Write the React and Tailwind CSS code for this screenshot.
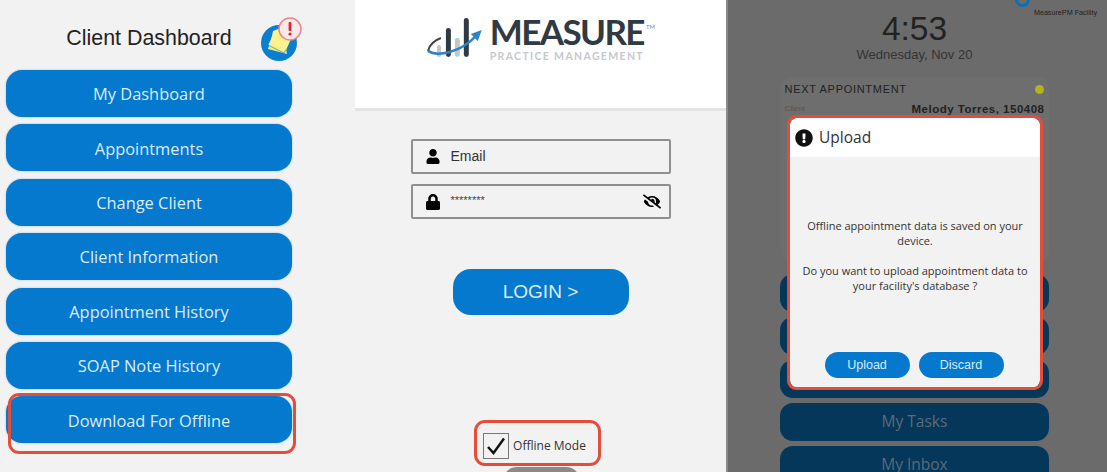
import React from 'react'
import { FaUser, FaLock, FaEyeSlash, FaExclamationCircle } from 'react-icons/fa'

const menu = ['My Dashboard', 'Appointments', 'Change Client', 'Client Information', 'Appointment History', 'SOAP Note History', 'Download For Offline']

function NotesBadge(){
  return (
    <svg width="42" height="44" viewBox="0 0 42 44">
      <circle cx="19" cy="26" r="18" fill="#0a7fd0" />
      <path d="M10 26 L26 31 L27 37 L8 32 Z" fill="#f3e97a" />
      <path d="M12 19 L29 26 L24 36 L8 28 Z" fill="#f8f08a" stroke="#0a7fd0" strokeWidth="0.6" />
      <path d="M13 14 L21 11 L31 22 L26 33 L11 24 Z" fill="#fbf38e" />
      <circle cx="30" cy="12" r="11" fill="#fbe9e9" stroke="#e8868a" strokeWidth="1.5" />
      <rect x="28.6" y="5" width="2.8" height="9" rx="1" fill="#e3212f" />
      <circle cx="30" cy="17" r="1.6" fill="#e3212f" />
    </svg>
  )
}

function LogoMark(){
  return (
    <svg width="56" height="46" viewBox="0 0 56 46">
      <rect x="10" y="30" width="4" height="12" rx="2" fill="#c3c6cb" />
      <rect x="19" y="13" width="5" height="29" rx="2.5" fill="#2f3a44" />
      <rect x="28" y="23" width="5" height="19" rx="2.5" fill="#c3c6cb" />
      <rect x="37" y="3" width="5" height="39" rx="2.5" fill="#2f3a44" />
      <path d="M1 36 C2 30 8 25 14 23" fill="none" stroke="#3b4650" strokeWidth="2" />
      <path d="M1 36 C10 42 34 38 50 20" fill="none" stroke="#2c83c7" strokeWidth="2.6" />
      <path d="M55 15 L44 19 L51 26 Z" fill="#2c83c7" />
    </svg>
  )
}

export default function App(){
  return (
    <div className="relative w-[1107px] h-[472px] overflow-hidden flex bg-[#f2f2f2] font-['Open_Sans',sans-serif]">
      {/* left: client menu */}
      <section className="w-[355px] shrink-0 pl-[6px] pt-[20px]">
        <div className="w-[286px] h-[50px] relative flex items-center justify-center">
          <h1 className="font-['Liberation_Sans',sans-serif] text-[21.4px] text-[#222] -mt-[14px]">Client Dashboard</h1>
          <div className="absolute left-[254px] top-[-3px]"><NotesBadge /></div>
        </div>
        <div className="flex flex-col gap-[7.4px] w-[286px]">
          {menu.map(m => (
            <button key={m} className="h-[47px] pt-[2px] rounded-[16px] bg-[#0579ce] text-[#dcebf7] text-[16.4px] shadow-[0_0_2px_#7db9e6]">{m}</button>
          ))}
        </div>
      </section>

      {/* middle: login */}
      <section className="w-[371px] shrink-0 flex flex-col items-center">
        <header className="w-full h-[111px] shrink-0 bg-white border-b-[3px] border-[#e4e4e4] flex justify-center pt-[15px]">
          <div className="flex items-start gap-[7px] w-[228px] ml-[1px]">
            <LogoMark />
            <div className="flex flex-col font-['Lato',sans-serif] leading-none">
              <span className="text-[#2f3a44] text-[35px] font-bold tracking-[-1.6px] leading-[32px] whitespace-nowrap">MEASURE<sup className="text-[6px] font-normal text-[#888] align-super ml-[2px] tracking-normal">TM</sup></span>
              <span className="text-[#c6c9ce] text-[10.5px] font-bold tracking-[1.35px] mt-[4px] whitespace-nowrap">PRACTICE MANAGEMENT</span>
            </div>
          </div>
        </header>
        <div className="mt-[28px] w-[260px] flex flex-col gap-[10px] font-['Liberation_Sans',sans-serif]">
          <label className="h-[35px] border-2 border-[#8f8f8f] rounded-[2px] flex items-center pl-[12px] text-[14px] text-[#333]">
            <FaUser className="w-[16px] h-[15px] text-black mr-[10px]" />Email
          </label>
          <label className="h-[35px] border-2 border-[#8f8f8f] rounded-[2px] flex items-center pl-[13px] pr-[8px] text-[14px] text-[#444]">
            <FaLock className="w-[14px] h-[16px] text-black mr-[11px]" />
            <span className="flex-1 text-[11px] -mt-[3px]">********</span>
            <FaEyeSlash className="w-[18px] h-[15px] text-black" />
          </label>
        </div>
        <button className="mt-[50px] w-[176px] h-[46px] shrink-0 rounded-[18px] bg-[#0579ce] text-[#dcebf7] text-[19px] font-['Liberation_Sans',sans-serif]">LOGIN &gt;</button>
        <div className="mt-[118px] shrink-0 flex items-center gap-[4px] -ml-[12px]">
          <span className="w-[26px] h-[26px] border border-[#777] bg-[#f2f2f2] flex items-center justify-center">
            <svg width="20" height="18" viewBox="0 0 20 18"><path d="M2 10 L7.5 16 L18 1.5" fill="none" stroke="#111" strokeWidth="2.4" /></svg>
          </span>
          <span className="text-[12px] text-[#333]">Offline Mode</span>
        </div>
        <div className="mt-[8px] ml-[2px] w-[77px] h-[30px] rounded-[14px] bg-[#8a8a8a] shrink-0" />
      </section>

      {/* right: dimmed dashboard */}
      <section className="flex-1 bg-[#6b6b6b] border-l-2 border-[#8a8a8a] flex flex-col items-center pl-[52px] pr-[58px] text-[#2a2a2a]">
        <div className="w-full relative flex flex-col items-center">
          <div className="absolute right-[-48px] top-[8px] text-[7.2px] text-[#222] whitespace-nowrap font-['Liberation_Sans',sans-serif]">MeasurePM Facility</div>
          <div className="absolute right-[19px] top-[-8px] w-[15px] h-[15px] rounded-full border-[3px] border-[#0a70b5]" />
          <div className="font-['Liberation_Sans',sans-serif] text-[33.5px] leading-[36px] mt-[11px] text-[#222]">4:53</div>
          <div className="font-['Liberation_Sans',sans-serif] text-[13px] leading-[16px] text-[#333]">Wednesday, Nov 20</div>
        </div>
        <div className="mt-[14px] w-[268px] h-[185px] shrink-0 rounded-[10px] bg-[#6e6e6e] px-[4px] pt-[4px] font-['Liberation_Sans',sans-serif]">
          <div className="flex items-center justify-between pr-[1px]">
            <span className="text-[11px] font-medium tracking-[0.7px] text-[#222]">NEXT APPOINTMENT</span>
            <span className="w-[9px] h-[9px] rounded-full bg-[#b3b31c]" />
          </div>
          <div className="flex items-center justify-between mt-[3px]">
            <span className="text-[8px] text-[#555]">Client</span>
            <span className="text-[11.5px] font-bold tracking-[0.5px] text-[#222]">Melody Torres, 150408</span>
          </div>
        </div>
        <div className="mt-[12px] flex flex-col gap-[5px] w-[269px] shrink-0">
          <div className="h-[38px] rounded-[13px] bg-[#04375a]" />
          <div className="h-[38px] rounded-[13px] bg-[#04375a]" />
          <div className="h-[38px] rounded-[13px] bg-[#04375a]" />
          <div className="h-[38px] rounded-[13px] bg-[#04375a] flex items-center justify-center text-[15.5px] text-[#5b6b78]">My Tasks</div>
          <div className="h-[38px] rounded-[13px] bg-[#04375a] flex items-center justify-center text-[15.5px] text-[#5b6b78]">My Inbox</div>
        </div>
      </section>

      {/* upload dialog sits over the dimmed page */}
      <div className="absolute left-[790px] top-[118px] w-[250px] h-[270px] rounded-[8px] overflow-hidden bg-[#f2f2f2] flex flex-col">
        <div className="h-[39px] bg-white flex items-center pl-[5px] gap-[6px] text-[15.5px] text-[#333]">
          <FaExclamationCircle className="w-[18px] h-[18px] text-[#111]" />Upload
        </div>
        <div className="flex-1 pt-[61px] px-[12px] text-center text-[11px] leading-[15px] text-[#333]">
          <p>Offline appointment data is saved on your device.</p>
          <p className="mt-[15px]">Do you want to upload appointment data to your facility's database ?</p>
        </div>
        <div className="flex justify-center gap-[9px] pb-[10px] pr-[2px] font-['Liberation_Sans',sans-serif]">
          <button className="w-[85px] h-[26px] rounded-full bg-[#0579ce] text-[#dcebf7] text-[12.5px]">Upload</button>
          <button className="w-[85px] h-[26px] rounded-full bg-[#0579ce] text-[#dcebf7] text-[12.5px]">Discard</button>
        </div>
      </div>

      {/* red call-outs */}
      <div className="absolute left-[8px] top-[393px] w-[288px] h-[61px] rounded-[11px] border-[3px] border-[#e44d3a]" />
      <div className="absolute left-[474px] top-[420px] w-[127px] h-[46px] rounded-[11px] border-[3px] border-[#e44d3a]" />
      <div className="absolute left-[787px] top-[115px] w-[256px] h-[275px] rounded-[9px] border-[3px] border-[#e44d3a]" />
    </div>
  )
}
